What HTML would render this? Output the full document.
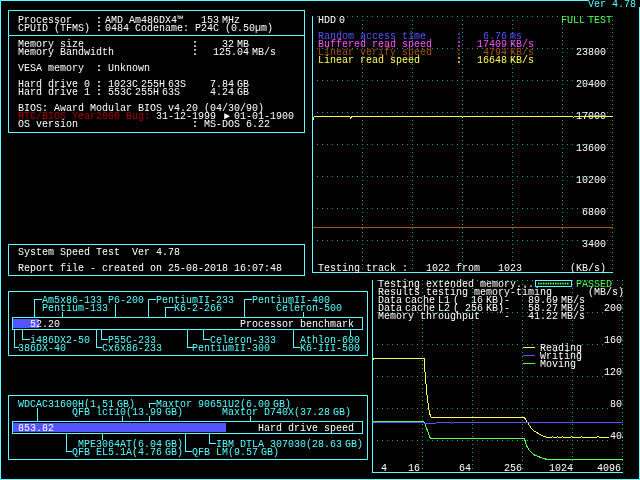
<!DOCTYPE html>
<html lang="en"><head><meta charset="utf-8"><title>System Speed Test 4.78</title>
<style>
html,body{margin:0;padding:0;background:#000;}
body{width:640px;height:480px;position:relative;overflow:hidden;}
svg{position:absolute;left:0;top:0;}
#tx{position:absolute;left:0;top:0;width:640px;height:480px;will-change:transform;}
.b{font-weight:bold;}
.t{position:absolute;display:block;height:8px;line-height:8px;font-family:"Liberation Mono","DejaVu Sans Mono",monospace;font-size:10px;white-space:pre;margin-top:1px;letter-spacing:0;}

</style></head><body>
<svg width="640" height="480" viewBox="0 0 640 480" shape-rendering="crispEdges">
<rect x="0" y="0" width="588" height="1" fill="#55ffff"/>
<rect x="0" y="0" width="1" height="480" fill="#55ffff"/>
<rect x="0" y="479" width="640" height="1" fill="#55ffff"/>
<rect x="639" y="7" width="1" height="473" fill="#55ffff"/>
<rect x="8" y="10" width="297" height="1" fill="#55ffff"/>
<rect x="8" y="132" width="297" height="1" fill="#55ffff"/>
<rect x="8" y="10" width="1" height="123" fill="#55ffff"/>
<rect x="304" y="10" width="1" height="123" fill="#55ffff"/>
<rect x="8" y="35" width="297" height="1" fill="#55ffff"/>
<rect x="8" y="244" width="297" height="1" fill="#55ffff"/>
<rect x="8" y="275" width="297" height="1" fill="#55ffff"/>
<rect x="8" y="244" width="1" height="32" fill="#55ffff"/>
<rect x="304" y="244" width="1" height="32" fill="#55ffff"/>
<path d="M317 16.5H613" stroke="#00aaaa" stroke-width="1" stroke-dasharray="1 4" fill="none"/>
<path d="M317 48.5H613" stroke="#00aaaa" stroke-width="1" stroke-dasharray="1 4" fill="none"/>
<path d="M317 80.5H613" stroke="#00aaaa" stroke-width="1" stroke-dasharray="1 4" fill="none"/>
<path d="M317 112.5H613" stroke="#00aaaa" stroke-width="1" stroke-dasharray="1 4" fill="none"/>
<path d="M317 144.5H613" stroke="#00aaaa" stroke-width="1" stroke-dasharray="1 4" fill="none"/>
<path d="M317 176.5H613" stroke="#00aaaa" stroke-width="1" stroke-dasharray="1 4" fill="none"/>
<path d="M317 208.5H613" stroke="#00aaaa" stroke-width="1" stroke-dasharray="1 4" fill="none"/>
<path d="M317 240.5H613" stroke="#00aaaa" stroke-width="1" stroke-dasharray="1 4" fill="none"/>
<path d="M362.5 16V272" stroke="#00aaaa" stroke-width="1" stroke-dasharray="1 3" fill="none"/>
<path d="M412.5 16V272" stroke="#00aaaa" stroke-width="1" stroke-dasharray="1 3" fill="none"/>
<path d="M462.5 16V272" stroke="#00aaaa" stroke-width="1" stroke-dasharray="1 3" fill="none"/>
<path d="M512.5 16V272" stroke="#00aaaa" stroke-width="1" stroke-dasharray="1 3" fill="none"/>
<path d="M562.5 16V272" stroke="#00aaaa" stroke-width="1" stroke-dasharray="1 3" fill="none"/>
<path d="M612.5 16V272" stroke="#00aaaa" stroke-width="1" stroke-dasharray="1 3" fill="none"/>
<rect x="312" y="16" width="1" height="257" fill="#55ffff"/>
<rect x="312" y="272" width="301" height="1" fill="#55ffff"/>
<rect x="313" y="227" width="300" height="1" fill="#aa5500"/>
<rect x="8" y="291" width="360" height="1" fill="#55ffff"/>
<rect x="8" y="355" width="360" height="1" fill="#55ffff"/>
<rect x="8" y="291" width="1" height="65" fill="#55ffff"/>
<rect x="367" y="291" width="1" height="65" fill="#55ffff"/>
<rect x="12" y="317" width="351" height="1" fill="#55ffff"/>
<rect x="12" y="329" width="351" height="1" fill="#55ffff"/>
<rect x="12" y="317" width="1" height="13" fill="#55ffff"/>
<rect x="362" y="317" width="1" height="13" fill="#55ffff"/>
<rect x="13" y="319" width="26" height="9" fill="#5555ff"/>
<path d="M41.5 299.5 L34.5 299.5 L34.5 317.5" stroke="#55ffff" stroke-width="1" fill="none" stroke-linejoin="miter" stroke-linecap="square"/>
<rect x="62" y="312" width="1" height="6" fill="#55ffff"/>
<rect x="115" y="304" width="1" height="14" fill="#55ffff"/>
<path d="M155.5 299.5 L148.5 299.5 L148.5 317.5" stroke="#55ffff" stroke-width="1" fill="none" stroke-linejoin="miter" stroke-linecap="square"/>
<path d="M173.5 307.5 L165.5 307.5 L165.5 317.5" stroke="#55ffff" stroke-width="1" fill="none" stroke-linejoin="miter" stroke-linecap="square"/>
<path d="M251.5 299.5 L244.5 299.5 L244.5 317.5" stroke="#55ffff" stroke-width="1" fill="none" stroke-linejoin="miter" stroke-linecap="square"/>
<rect x="303" y="312" width="1" height="6" fill="#55ffff"/>
<path d="M22.5 329.5 L22.5 339.5 L29.5 339.5" stroke="#55ffff" stroke-width="1" fill="none" stroke-linejoin="miter" stroke-linecap="square"/>
<path d="M14.5 329.5 L14.5 347.5 L18.5 347.5" stroke="#55ffff" stroke-width="1" fill="none" stroke-linejoin="miter" stroke-linecap="square"/>
<path d="M101.5 329.5 L101.5 339.5 L107.5 339.5" stroke="#55ffff" stroke-width="1" fill="none" stroke-linejoin="miter" stroke-linecap="square"/>
<path d="M96.5 329.5 L96.5 347.5 L101.5 347.5" stroke="#55ffff" stroke-width="1" fill="none" stroke-linejoin="miter" stroke-linecap="square"/>
<path d="M203.5 329.5 L203.5 339.5 L209.5 339.5" stroke="#55ffff" stroke-width="1" fill="none" stroke-linejoin="miter" stroke-linecap="square"/>
<path d="M187.5 329.5 L187.5 347.5 L192.5 347.5" stroke="#55ffff" stroke-width="1" fill="none" stroke-linejoin="miter" stroke-linecap="square"/>
<rect x="350" y="329" width="1" height="8" fill="#55ffff"/>
<path d="M293.5 329.5 L293.5 347.5 L299.5 347.5" stroke="#55ffff" stroke-width="1" fill="none" stroke-linejoin="miter" stroke-linecap="square"/>
<rect x="8" y="395" width="360" height="1" fill="#55ffff"/>
<rect x="8" y="459" width="360" height="1" fill="#55ffff"/>
<rect x="8" y="395" width="1" height="65" fill="#55ffff"/>
<rect x="367" y="395" width="1" height="65" fill="#55ffff"/>
<rect x="12" y="421" width="351" height="1" fill="#55ffff"/>
<rect x="12" y="433" width="351" height="1" fill="#55ffff"/>
<rect x="12" y="421" width="1" height="13" fill="#55ffff"/>
<rect x="362" y="421" width="1" height="13" fill="#55ffff"/>
<rect x="13" y="423" width="213" height="9" fill="#5555ff"/>
<rect x="37" y="408" width="1" height="14" fill="#55ffff"/>
<path d="M155.5 403.5 L149.5 403.5 L149.5 407.5" stroke="#55ffff" stroke-width="1" fill="none" stroke-linejoin="miter" stroke-linecap="square"/>
<rect x="149" y="416" width="1" height="6" fill="#55ffff"/>
<rect x="122" y="416" width="1" height="6" fill="#55ffff"/>
<rect x="250" y="416" width="1" height="6" fill="#55ffff"/>
<rect x="102" y="433" width="1" height="7" fill="#55ffff"/>
<path d="M66.5 433.5 L66.5 451.5 L71.5 451.5" stroke="#55ffff" stroke-width="1" fill="none" stroke-linejoin="miter" stroke-linecap="square"/>
<path d="M185.5 433.5 L185.5 451.5 L191.5 451.5" stroke="#55ffff" stroke-width="1" fill="none" stroke-linejoin="miter" stroke-linecap="square"/>
<path d="M209.5 433.5 L209.5 443.5 L215.5 443.5" stroke="#55ffff" stroke-width="1" fill="none" stroke-linejoin="miter" stroke-linecap="square"/>
<path d="M377 280.5H623" stroke="#00aaaa" stroke-width="1" stroke-dasharray="1 4" fill="none"/>
<path d="M377 312.5H623" stroke="#00aaaa" stroke-width="1" stroke-dasharray="1 4" fill="none"/>
<path d="M377 344.5H623" stroke="#00aaaa" stroke-width="1" stroke-dasharray="1 4" fill="none"/>
<path d="M377 376.5H623" stroke="#00aaaa" stroke-width="1" stroke-dasharray="1 4" fill="none"/>
<path d="M377 408.5H623" stroke="#00aaaa" stroke-width="1" stroke-dasharray="1 4" fill="none"/>
<path d="M377 440.5H623" stroke="#00aaaa" stroke-width="1" stroke-dasharray="1 4" fill="none"/>
<path d="M422.5 280V472" stroke="#00aaaa" stroke-width="1" stroke-dasharray="1 3" fill="none"/>
<path d="M472.5 280V472" stroke="#00aaaa" stroke-width="1" stroke-dasharray="1 3" fill="none"/>
<path d="M522.5 280V472" stroke="#00aaaa" stroke-width="1" stroke-dasharray="1 3" fill="none"/>
<path d="M572.5 280V472" stroke="#00aaaa" stroke-width="1" stroke-dasharray="1 3" fill="none"/>
<path d="M622.5 280V472" stroke="#00aaaa" stroke-width="1" stroke-dasharray="1 3" fill="none"/>
<rect x="372" y="280" width="1" height="193" fill="#55ffff"/>
<rect x="372" y="472" width="251" height="1" fill="#55ffff"/>
<rect x="535" y="280" width="37" height="1" fill="#55ffff"/>
<rect x="535" y="286" width="37" height="1" fill="#55ffff"/>
<rect x="535" y="280" width="1" height="7" fill="#55ffff"/>
<rect x="571" y="280" width="1" height="7" fill="#55ffff"/>
<g shape-rendering="geometricPrecision" fill="#55ff55"><rect x="538.00" y="282.6" width="1.5" height="1.9"/><rect x="540.42" y="282.6" width="1.5" height="1.9"/><rect x="542.84" y="282.6" width="1.5" height="1.9"/><rect x="545.26" y="282.6" width="1.5" height="1.9"/><rect x="547.68" y="282.6" width="1.5" height="1.9"/><rect x="550.10" y="282.6" width="1.5" height="1.9"/><rect x="552.52" y="282.6" width="1.5" height="1.9"/><rect x="554.94" y="282.6" width="1.5" height="1.9"/><rect x="557.36" y="282.6" width="1.5" height="1.9"/><rect x="559.78" y="282.6" width="1.5" height="1.9"/><rect x="562.20" y="282.6" width="1.5" height="1.9"/><rect x="564.62" y="282.6" width="1.5" height="1.9"/><rect x="567.04" y="282.6" width="1.5" height="1.9"/></g>
<rect x="523" y="347" width="12" height="1" fill="#ffff55"/>
<rect x="523" y="355" width="12" height="1" fill="#5555ff"/>
<rect x="523" y="363" width="12" height="1" fill="#55ff55"/>
<path d="M373.5 359.5 L373.5 358.5 L424.5 358.5 L424.5 365.5 L425.5 377.5 L426.5 390.5 L427.5 399.5 L428.5 406.5 L429.5 412.5 L430.5 416.5 L431.5 417.5 L524.5 417.5 L525.5 419.5 L527.5 422.5 L529.5 425.5 L531.5 428.5 L533.5 430.5 L536.5 432.5 L538.5 433.5 L541.5 435.5 L544.5 436.5 L547.5 437.5 L551.5 437.5 L552.5 436.5 L553.5 437.5 L556.5 437.5 L557.5 436.5 L558.5 437.5 L561.5 437.5 L562.5 436.5 L563.5 437.5 L570.5 437.5 L571.5 436.5 L572.5 437.5 L580.5 437.5 L581.5 436.5 L582.5 437.5 L596.5 437.5 L597.5 436.5 L598.5 436.5 L599.5 437.5 L608.5 437.5" stroke="#ffff55" stroke-width="1" fill="none" stroke-linejoin="miter" stroke-linecap="square"/>
<rect x="621" y="437" width="2" height="1" fill="#ffff55"/>
<path d="M373.5 421.5 L423.5 421.5 L424.5 422.5 L425.5 425.5 L426.5 428.5 L427.5 430.5 L428.5 433.5 L429.5 436.5 L430.5 438.5 L524.5 438.5 L525.5 442.5 L526.5 445.5 L527.5 447.5 L529.5 450.5 L531.5 452.5 L533.5 454.5 L535.5 455.5 L538.5 456.5 L540.5 457.5 L543.5 458.5 L547.5 459.5 L622.5 459.5" stroke="#55ff55" stroke-width="1" fill="none" stroke-linejoin="miter" stroke-linecap="square"/>
<path d="M373.5 422.5 L423.5 422.5 L424.5 423.5 L435.5 423.5 L436.5 422.5 L450.5 422.5 L451.5 423.5 L452.5 422.5 L622.5 422.5" stroke="#5555ff" stroke-width="1" fill="none" stroke-linejoin="miter" stroke-linecap="square"/>
</svg>
<div id="tx">
<span class="t" style="left:588px;top:0px;color:#55ffff;">Ver 4.78</span>
<span class="t" style="left:18px;top:16px;color:#ffffff;">Processor</span>
<span class="t b" style="left:96px;top:16px;color:#ffffff;">:</span>
<span class="t" style="left:105px;top:16px;color:#ffffff;">AMD Am486DX4™</span>
<span class="t" style="left:201px;top:16px;color:#ffffff;">153</span>
<span class="t" style="left:222px;top:16px;color:#ffffff;">MHz</span>
<span class="t" style="left:18px;top:24px;color:#ffffff;">CPUID (TFMS)</span>
<span class="t b" style="left:96px;top:24px;color:#ffffff;">:</span>
<span class="t" style="left:105px;top:24px;color:#ffffff;">0484 Codename: P24C (0.50µm)</span>
<span class="t" style="left:18px;top:40px;color:#ffffff;">Memory size</span>
<span class="t b" style="left:192px;top:40px;color:#ffffff;">:</span>
<span class="t" style="left:222px;top:40px;color:#ffffff;">32</span>
<span class="t" style="left:237px;top:40px;color:#ffffff;">MB</span>
<span class="t" style="left:18px;top:48px;color:#ffffff;">Memory Bandwidth</span>
<span class="t b" style="left:192px;top:48px;color:#ffffff;">:</span>
<span class="t" style="left:213px;top:48px;color:#ffffff;">125.04</span>
<span class="t" style="left:252px;top:48px;color:#ffffff;">MB/s</span>
<span class="t" style="left:18px;top:64px;color:#ffffff;">VESA memory</span>
<span class="t b" style="left:96px;top:64px;color:#ffffff;">:</span>
<span class="t" style="left:108px;top:64px;color:#ffffff;">Unknown</span>
<span class="t" style="left:18px;top:80px;color:#ffffff;">Hard drive 0</span>
<span class="t b" style="left:96px;top:80px;color:#ffffff;">:</span>
<span class="t" style="left:108px;top:80px;color:#ffffff;">1023C</span>
<span class="t" style="left:141px;top:80px;color:#ffffff;">255H</span>
<span class="t" style="left:168px;top:80px;color:#ffffff;">63S</span>
<span class="t" style="left:210px;top:80px;color:#ffffff;">7.84</span>
<span class="t" style="left:237px;top:80px;color:#ffffff;">GB</span>
<span class="t" style="left:18px;top:88px;color:#ffffff;">Hard drive 1</span>
<span class="t b" style="left:96px;top:88px;color:#ffffff;">:</span>
<span class="t" style="left:108px;top:88px;color:#ffffff;">553C</span>
<span class="t" style="left:135px;top:88px;color:#ffffff;">255H</span>
<span class="t" style="left:162px;top:88px;color:#ffffff;">63S</span>
<span class="t" style="left:210px;top:88px;color:#ffffff;">4.24</span>
<span class="t" style="left:237px;top:88px;color:#ffffff;">GB</span>
<span class="t" style="left:18px;top:104px;color:#ffffff;">BIOS: Award Modular BIOS v4.20 (04/30/90)</span>
<span class="t" style="left:18px;top:112px;color:#aa0000;">RTC/BIOS Year2000 Bug:</span>
<span class="t" style="left:156px;top:112px;color:#ffffff;">31-12-1999</span>
<span class="t" style="left:234px;top:112px;color:#ffffff;">01-01-1900</span>
<span class="t" style="left:224px;top:112px;color:#ffffff;">►</span>
<span class="t" style="left:18px;top:120px;color:#ffffff;">OS version</span>
<span class="t b" style="left:192px;top:120px;color:#ffffff;">:</span>
<span class="t" style="left:204px;top:120px;color:#ffffff;">MS-DOS 6.22</span>
<span class="t" style="left:18px;top:248px;color:#ffffff;">System Speed Test  Ver 4.78</span>
<span class="t" style="left:18px;top:264px;color:#ffffff;">Report file - created on 25-08-2018 16:07:48</span>
<span class="t" style="left:318px;top:16px;color:#ffffff;">HDD</span>
<span class="t" style="left:339px;top:16px;color:#ffffff;">0</span>
<span class="t" style="left:318px;top:32px;color:#5555ff;">Random access time</span>
<span class="t b" style="left:456px;top:32px;color:#5555ff;">:</span>
<span class="t" style="left:483px;top:32px;color:#5555ff;">6.76</span>
<span class="t" style="left:510px;top:32px;color:#5555ff;">ms</span>
<span class="t" style="left:318px;top:40px;color:#ff55ff;">Buffered read speed</span>
<span class="t b" style="left:456px;top:40px;color:#ff55ff;">:</span>
<span class="t" style="left:477px;top:40px;color:#ff55ff;">17409</span>
<span class="t" style="left:510px;top:40px;color:#ff55ff;">KB/s</span>
<span class="t" style="left:318px;top:48px;color:#aa5500;">Linear verify speed</span>
<span class="t b" style="left:456px;top:48px;color:#aa5500;">:</span>
<span class="t" style="left:483px;top:48px;color:#aa5500;">4794</span>
<span class="t" style="left:510px;top:48px;color:#aa5500;">KB/s</span>
<span class="t" style="left:318px;top:56px;color:#ffff55;">Linear read speed</span>
<span class="t b" style="left:456px;top:56px;color:#ffff55;">:</span>
<span class="t" style="left:477px;top:56px;color:#ffff55;">16648</span>
<span class="t" style="left:510px;top:56px;color:#ffff55;">KB/s</span>
<span class="t" style="left:561px;top:16px;color:#55ff55;">FULL</span>
<span class="t" style="left:588px;top:16px;color:#55ff55;">TEST</span>
<span class="t" style="left:576px;top:48px;color:#ffffff;background:#000;">23800</span>
<span class="t" style="left:576px;top:80px;color:#ffffff;background:#000;">20400</span>
<span class="t" style="left:576px;top:112px;color:#ffffff;background:#000;">17000</span>
<span class="t" style="left:576px;top:144px;color:#ffffff;background:#000;">13600</span>
<span class="t" style="left:576px;top:176px;color:#ffffff;background:#000;">10200</span>
<span class="t" style="left:582px;top:208px;color:#ffffff;background:#000;">6800</span>
<span class="t" style="left:582px;top:240px;color:#ffffff;background:#000;">3400</span>
<span class="t" style="left:318px;top:264px;color:#ffffff;">Testing track :</span>
<span class="t" style="left:426px;top:264px;color:#ffffff;">1022 from</span>
<span class="t" style="left:498px;top:264px;color:#ffffff;">1023</span>
<span class="t" style="left:570px;top:264px;color:#ffffff;">(KB/s)</span>
<span class="t" style="left:30px;top:320px;color:#ffffff;">52.20</span>
<span class="t" style="left:240px;top:320px;color:#ffffff;">Processor benchmark</span>
<span class="t" style="left:42px;top:296px;color:#55ffff;">Am5x86-133 P6-200</span>
<span class="t" style="left:156px;top:296px;color:#55ffff;">PentiumII-233</span>
<span class="t" style="left:252px;top:296px;color:#55ffff;">PentiumII-400</span>
<span class="t" style="left:42px;top:304px;color:#55ffff;">Pentium-133</span>
<span class="t" style="left:174px;top:304px;color:#55ffff;">K6-2-266</span>
<span class="t" style="left:276px;top:304px;color:#55ffff;">Celeron-500</span>
<span class="t" style="left:30px;top:336px;color:#55ffff;">i486DX2-50</span>
<span class="t" style="left:108px;top:336px;color:#55ffff;">P55C-233</span>
<span class="t" style="left:210px;top:336px;color:#55ffff;">Celeron-333</span>
<span class="t" style="left:300px;top:336px;color:#55ffff;">Athlon-600</span>
<span class="t" style="left:18px;top:344px;color:#55ffff;">386DX-40</span>
<span class="t" style="left:102px;top:344px;color:#55ffff;">Cx6x86-233</span>
<span class="t" style="left:192px;top:344px;color:#55ffff;">PentiumII-300</span>
<span class="t" style="left:300px;top:344px;color:#55ffff;">K6-III-500</span>
<span class="t" style="left:18px;top:424px;color:#ffffff;">853.82</span>
<span class="t" style="left:258px;top:424px;color:#ffffff;">Hard drive speed</span>
<span class="t" style="left:18px;top:400px;color:#55ffff;">WDCAC31600H(1.51</span>
<span class="t" style="left:117px;top:400px;color:#55ffff;">GB)</span>
<span class="t" style="left:156px;top:400px;color:#55ffff;">Maxtor 90651U2(6.00</span>
<span class="t" style="left:273px;top:400px;color:#55ffff;">GB)</span>
<span class="t" style="left:72px;top:408px;color:#55ffff;">QFB lct10(13.99</span>
<span class="t" style="left:165px;top:408px;color:#55ffff;">GB)</span>
<span class="t" style="left:222px;top:408px;color:#55ffff;">Maxtor D740X(37.28</span>
<span class="t" style="left:333px;top:408px;color:#55ffff;">GB)</span>
<span class="t" style="left:78px;top:440px;color:#55ffff;">MPE3064AT(6.04</span>
<span class="t" style="left:165px;top:440px;color:#55ffff;">GB)</span>
<span class="t" style="left:216px;top:440px;color:#55ffff;">IBM DTLA 307030(28.63</span>
<span class="t" style="left:345px;top:440px;color:#55ffff;">GB)</span>
<span class="t" style="left:72px;top:448px;color:#55ffff;">QFB EL5.1A(4.76</span>
<span class="t" style="left:165px;top:448px;color:#55ffff;">GB)</span>
<span class="t" style="left:192px;top:448px;color:#55ffff;">QFB LM(9.57</span>
<span class="t" style="left:261px;top:448px;color:#55ffff;">GB)</span>
<span class="t" style="left:378px;top:280px;color:#ffffff;">Testing extended memory...</span>
<span class="t" style="left:576px;top:280px;color:#55ff55;">PASSED</span>
<span class="t" style="left:378px;top:288px;color:#ffffff;">Results testing memory-timing</span>
<span class="t" style="left:588px;top:288px;color:#ffffff;">(MB/s)</span>
<span class="t" style="left:378px;top:296px;color:#ffffff;">Data</span>
<span class="t" style="left:405px;top:296px;color:#ffffff;">cache</span>
<span class="t" style="left:438px;top:296px;color:#ffffff;">L1</span>
<span class="t" style="left:453px;top:296px;color:#ffffff;">(</span>
<span class="t" style="left:471px;top:296px;color:#ffffff;">16</span>
<span class="t" style="left:486px;top:296px;color:#ffffff;">KB)</span>
<span class="t" style="left:504px;top:296px;color:#ffffff;">-</span>
<span class="t" style="left:528px;top:296px;color:#ffffff;">89.69</span>
<span class="t" style="left:561px;top:296px;color:#ffffff;">MB/s</span>
<span class="t" style="left:378px;top:304px;color:#ffffff;">Data</span>
<span class="t" style="left:405px;top:304px;color:#ffffff;">cache</span>
<span class="t" style="left:438px;top:304px;color:#ffffff;">L2</span>
<span class="t" style="left:453px;top:304px;color:#ffffff;">(</span>
<span class="t" style="left:465px;top:304px;color:#ffffff;">256</span>
<span class="t" style="left:486px;top:304px;color:#ffffff;">KB)</span>
<span class="t" style="left:504px;top:304px;color:#ffffff;">-</span>
<span class="t" style="left:528px;top:304px;color:#ffffff;">58.27</span>
<span class="t" style="left:561px;top:304px;color:#ffffff;">MB/s</span>
<span class="t" style="left:378px;top:312px;color:#ffffff;">Memory throughput</span>
<span class="t" style="left:504px;top:312px;color:#ffffff;">-</span>
<span class="t" style="left:528px;top:312px;color:#ffffff;">41.22</span>
<span class="t" style="left:561px;top:312px;color:#ffffff;">MB/s</span>
<span class="t" style="left:604px;top:304px;color:#ffffff;background:#000;">200</span>
<span class="t" style="left:604px;top:336px;color:#ffffff;background:#000;">160</span>
<span class="t" style="left:604px;top:368px;color:#ffffff;background:#000;">120</span>
<span class="t" style="left:610px;top:400px;color:#ffffff;background:#000;">80</span>
<span class="t" style="left:610px;top:432px;color:#ffffff;background:#000;">40</span>
<span class="t" style="left:381px;top:464px;color:#ffffff;">4</span>
<span class="t" style="left:408px;top:464px;color:#ffffff;">16</span>
<span class="t" style="left:459px;top:464px;color:#ffffff;">64</span>
<span class="t" style="left:504px;top:464px;color:#ffffff;">256</span>
<span class="t" style="left:549px;top:464px;color:#ffffff;">1024</span>
<span class="t" style="left:597px;top:464px;color:#ffffff;">4096</span>
<span class="t" style="left:540px;top:344px;color:#ffffff;">Reading</span>
<span class="t" style="left:540px;top:352px;color:#ffffff;">Writing</span>
<span class="t" style="left:540px;top:360px;color:#ffffff;">Moving</span>
</div>
<svg width="640" height="480" viewBox="0 0 640 480" shape-rendering="crispEdges" style="pointer-events:none">
<path d="M313.5 119.5 L313.5 117.5 L314.5 116.5 L349.5 116.5 L350.5 117.5 L350.5 118.5 L351.5 116.5 L461.5 116.5 L462.5 117.5 L463.5 116.5 L572.5 116.5 L573.5 117.5 L574.5 116.5 L612.5 116.5" stroke="#ffff55" stroke-width="1" fill="none" stroke-linejoin="miter" stroke-linecap="square"/>
</svg>
</body></html>
